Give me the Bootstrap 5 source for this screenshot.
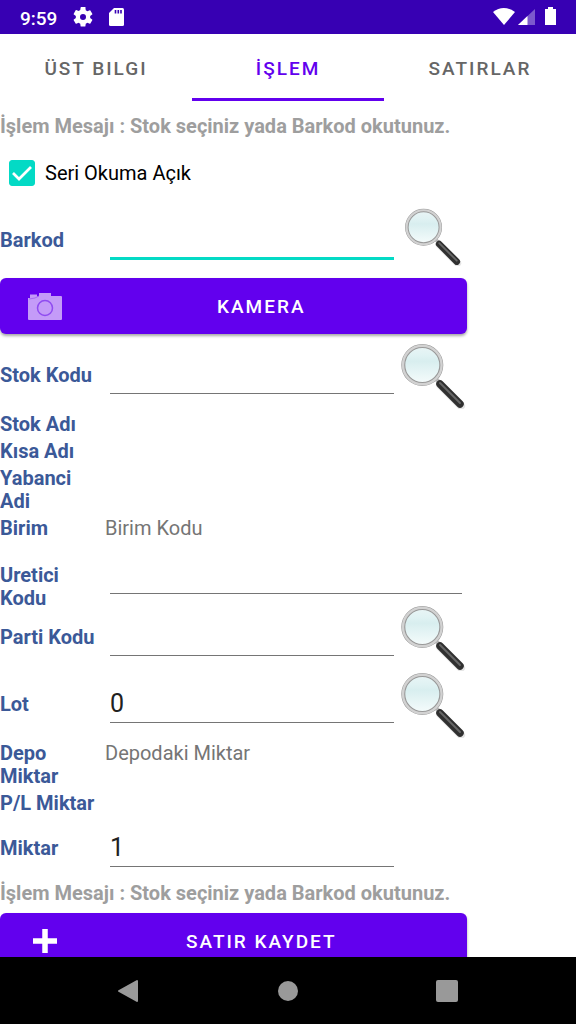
<!DOCTYPE html>
<html lang="tr">
<head>
<meta charset="utf-8">
<meta name="viewport" content="width=device-width, initial-scale=1">
<title>İşlem</title>
<link href="https://cdn.jsdelivr.net/npm/bootstrap@5.3.0/dist/css/bootstrap.min.css" rel="stylesheet">
<style>
body { font-family: Roboto, "Liberation Sans", sans-serif; font-size: 20px; line-height: 23px; color: #000; background: #fff; }
.status-bar { background: #3700b3; color: #fff; height: 34px; padding: 0 20px; font-weight: 500; }
.status-bar .clock { font-size: 19px; padding-top: 2px; }
.status-bar svg, .nav-keys svg, .lens svg, .action svg { display: block; }
.tab-strip { height: 67px; }
.tab-strip .nav-link { height: 67px; border-radius: 0; padding: 4px 0 0; color: #666; font-size: 19px; font-weight: 500; letter-spacing: 2px; border-bottom: 3px solid transparent; }
.tab-strip .nav-link.active { color: #6200ee; border-bottom-color: #6200ee; }
.form-area { width: 81%; padding-top: 14px; }
.message { color: #9e9e9e; font-weight: 700; white-space: nowrap; }
.check-line { height: 69px; padding: 0 9px; gap: 10px; }
.check-line label { padding-top: 2px; }
.check-line .form-check-input { width: 26px; height: 26px; margin: 0; border-radius: 3px; }
.check-line .form-check-input:checked { border-color: #03dac5; background-color: #03dac5; background-size: 26px 26px; background-image: url("data:image/svg+xml,%3Csvg xmlns='http://www.w3.org/2000/svg' viewBox='0 0 26 26'%3E%3Cpath d='M4 13l6 6L22 7' fill='none' stroke='white' stroke-width='2.7'/%3E%3C/svg%3E"); }
.entry { display: grid; grid-template-columns: 100px 1fr 68px; align-items: center; min-height: 67px; }
.entry.wide { grid-template-columns: 100px 1fr; align-items: start; min-height: 64px; }
.entry.wide .caption { height: 40px; margin-top: 24px; }
.entry.wide .line-input { margin-top: 18px; margin-right: 5px; }
.info { display: grid; grid-template-columns: 100px 1fr; margin-bottom: 4px; }
.caption { color: #3b5998; font-weight: 700; }
.value { color: #757575; padding-left: 5px; }
.line-input { width: auto; min-width: 0; height: 36px; margin: 0 5px 0 10px; padding: 0 0 2px; border: 0; border-bottom: 1px solid #757575; border-radius: 0; font-size: 25px; line-height: 30px; color: #212121; background: transparent; box-shadow: none; }
.line-input.current { height: 38px; border-bottom: 3px solid #03dac5; }
.line-input:focus { box-shadow: none; }
.lens { padding: 0; border: 0; background: none; justify-self: start; }
.action { display: grid; grid-template-columns: 90px 1fr 34px; align-items: center; width: 100%; height: 56px; padding: 0; border: 0; border-radius: 6px; background: #6200ee; color: #fff; font-size: 19px; line-height: 23px; font-weight: 500; letter-spacing: 2px; box-shadow: 0 2px 3px rgba(0,0,0,.35); }
.action:hover { background: #6200ee; color: #fff; }
.action svg { justify-self: center; }
.nav-keys { height: 67px; background: #000; }
.nav-keys button { border: 0; padding: 0; background: none; width: 159px; }
.nav-keys svg { margin: auto; }
</style>
</head>
<body>
<svg width="0" height="0" class="position-absolute" aria-hidden="true">
  <defs>
    <linearGradient id="glass" x1="0" y1="0" x2="0" y2="1"><stop offset="0" stop-color="#eaf5f6"/><stop offset=".25" stop-color="#e0f2f3"/><stop offset=".4" stop-color="#d8eeef"/><stop offset="1" stop-color="#f6fcfc"/></linearGradient>
    <symbol id="magnifier" viewBox="0 0 68 67">
      <path d="M41 43l21 21" stroke="#000" stroke-opacity=".1" stroke-width="8" stroke-linecap="round"/>
      <path d="M36 36l5 5" stroke="#bbb" stroke-width="4"/>
      <path d="M41 42l20 20" stroke="#303030" stroke-width="7.500" stroke-linecap="round"/>
      <path d="M41 41l20 20" stroke="#686868" stroke-width="2" stroke-linecap="round"/>
      <circle cx="23.300" cy="23" r="19" fill="url(#glass)" stroke="#999" stroke-width="4"/>
      <circle cx="23.300" cy="23" r="19.300" fill="none" stroke="#d2d2d2" stroke-width="2.400"/>
    </symbol>
  </defs>
</svg>
<div class="d-flex flex-column vh-100 overflow-hidden">
  <header class="status-bar d-flex align-items-center flex-shrink-0">
    <span class="clock">9:59</span>
    <svg class="ms-3" width="20" height="20" viewBox="2 2 20 20" fill="#fff"><path d="M19.140 12.940c.04-.3.06-.61.06-.94s-.02-.64-.07-.94l2.030-1.580a.49.49 0 0 0 .12-.61l-1.920-3.320a.49.49 0 0 0-.59-.22l-2.390.96a7 7 0 0 0-1.620-.94l-.36-2.540A.48.48 0 0 0 13.920 2h-3.840a.47.47 0 0 0-.47.41l-.36 2.540c-.59.24-1.130.57-1.620.94l-2.390-.96a.47.47 0 0 0-.59.22L2.740 8.870a.47.47 0 0 0 .12.61l2.030 1.580c-.05.3-.09.63-.09.94s.02.64.07.94l-2.030 1.580a.49.49 0 0 0-.12.61l1.920 3.320c.12.22.37.29.59.22l2.390-.96c.5.38 1.030.7 1.620.94l.36 2.540c.05.24.24.41.48.41h3.840c.24 0 .44-.17.47-.41l.36-2.540a7 7 0 0 0 1.620-.94l2.390.96c.22.08.47 0 .59-.22l1.920-3.320a.47.47 0 0 0-.12-.61zM12 15a3 3 0 1 1 0-6 3 3 0 0 1 0 6z"/></svg>
    <svg class="ms-3 me-auto" width="15" height="18" viewBox="0 0 15 18"><path d="M5 0h8.500q1.500 0 1.500 1.500v15q0 1.500-1.500 1.500h-12Q0 18 0 16.500V5z" fill="#fff"/><path d="M6.500 2v3.500M9.300 2v3.500M12 2v3.500" stroke="#3700b3" stroke-width="1.600"/></svg>
    <svg width="64" height="20" viewBox="0 0 64 20"><path d="M1 5Q11.500-3 23 5L12 18z" fill="#fff"/><path d="M43 2v16H26z" fill="#fff" opacity=".35"/><path d="M35.500 9V18H26z" fill="#fff"/><path d="M56 0h5v2h3v16H53V2h3z" fill="#fff"/></svg>
  </header>
  <nav class="tab-strip nav nav-pills nav-fill flex-nowrap flex-shrink-0" aria-label="Sekmeler">
    <a class="nav-link bg-transparent d-flex align-items-center justify-content-center w-100" href="#ust">ÜST BILGI</a>
    <a class="nav-link bg-transparent active d-flex align-items-center justify-content-center w-100" href="#islem" aria-current="page">İŞLEM</a>
    <a class="nav-link bg-transparent d-flex align-items-center justify-content-center w-100" href="#satir">SATIRLAR</a>
  </nav>
  <main class="flex-grow-1 overflow-hidden">
    <form class="form-area" id="islem">
      <p class="message mb-0">İşlem Mesajı : Stok seçiniz yada Barkod okutunuz.</p>
      <div class="check-line d-flex align-items-center">
        <input class="form-check-input" type="checkbox" id="seri" checked>
        <label for="seri">Seri Okuma Açık</label>
      </div>
      <div class="entry">
        <label class="caption" for="barkod">Barkod</label>
        <input class="line-input current form-control" id="barkod" type="text">
        <button class="lens align-self-start" type="button" aria-label="Barkod ara"><svg class="ms-1" width="60" height="59"><use href="#magnifier"/></svg></button>
      </div>
      <button class="action btn mt-1 mb-2" type="button">
        <svg width="36" height="29" viewBox="0 0 36 29"><path d="M1 6h2V2.500h7V5l2-1V1h12v3h10q1 0 1 1v22q0 1-1 1H2q-1 0-1-1z" fill="#c49bf8"/><circle cx="18" cy="16" r="7.500" fill="none" stroke="#8f4bf0" stroke-width="1.500"/><path d="M2 7l6-1 4-2" fill="none" stroke="#a76bf3"/></svg>
        <span>KAMERA</span>
      </button>
      <div class="entry">
        <label class="caption" for="stok">Stok Kodu</label>
        <input class="line-input form-control" id="stok" type="text">
        <button class="lens" type="button" aria-label="Stok ara"><svg width="68" height="67"><use href="#magnifier"/></svg></button>
      </div>
      <div class="info mt-1"><span class="caption">Stok Adı</span></div>
      <div class="info"><span class="caption">Kısa Adı</span></div>
      <div class="info"><span class="caption">Yabanci Adi</span></div>
      <div class="info mb-0"><span class="caption">Birim</span><span class="value">Birim Kodu</span></div>
      <div class="entry wide">
        <label class="caption" for="uretici">Uretici Kodu</label>
        <input class="line-input form-control" id="uretici" type="text">
      </div>
      <div class="entry">
        <label class="caption" for="parti">Parti Kodu</label>
        <input class="line-input form-control" id="parti" type="text">
        <button class="lens" type="button" aria-label="Parti ara"><svg width="68" height="67"><use href="#magnifier"/></svg></button>
      </div>
      <div class="entry">
        <label class="caption" for="lot">Lot</label>
        <input class="line-input form-control" id="lot" type="text" value="0">
        <button class="lens" type="button" aria-label="Lot ara"><svg width="68" height="67"><use href="#magnifier"/></svg></button>
      </div>
      <div class="info mt-1"><span class="caption">Depo Miktar</span><span class="value">Depodaki Miktar</span></div>
      <div class="info mb-0"><span class="caption">P/L Miktar</span></div>
      <div class="entry">
        <label class="caption" for="miktar">Miktar</label>
        <input class="line-input form-control" id="miktar" type="text" value="1">
      </div>
      <p class="message mb-2">İşlem Mesajı : Stok seçiniz yada Barkod okutunuz.</p>
      <button class="action btn" type="submit">
        <svg width="26" height="26" viewBox="0 0 26 26"><path d="M13 1v24M1 13h24" stroke="#fff" stroke-width="5.500"/></svg>
        <span>SATIR KAYDET</span>
      </button>
    </form>
  </main>
  <footer class="nav-keys d-flex justify-content-center align-items-center flex-shrink-0">
    <button type="button" aria-label="Geri"><svg width="22" height="24" viewBox="0 0 22 24"><path d="M19 2v20L1 12z" fill="#999" stroke="#999" stroke-width="2" stroke-linejoin="round"/></svg></button>
    <button type="button" aria-label="Ana ekran"><svg width="20" height="20" viewBox="0 0 20 20"><circle cx="10" cy="10" r="10" fill="#999"/></svg></button>
    <button type="button" aria-label="Son uygulamalar"><svg width="22" height="22" viewBox="0 0 22 22"><rect width="22" height="22" rx="2" fill="#999"/></svg></button>
  </footer>
</div>
<script src="https://cdn.jsdelivr.net/npm/bootstrap@5.3.0/dist/js/bootstrap.bundle.min.js"></script>
</body>
</html>
